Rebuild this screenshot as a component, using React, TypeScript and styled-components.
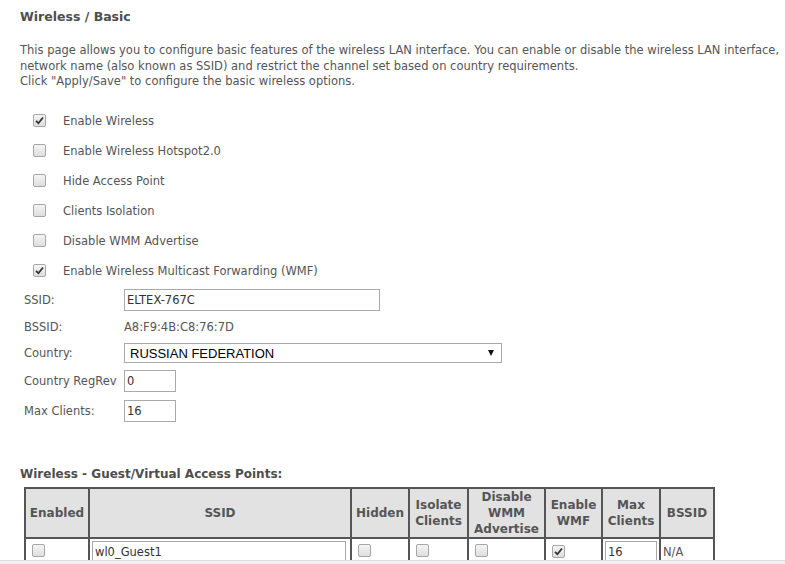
import styled, { createGlobalStyle } from 'styled-components';

const GlobalStyle = createGlobalStyle`
  html, body {
    margin: 0;
    padding: 0;
    background: #fff;
    overflow: hidden;
  }
  body {
    font-family: "DejaVu Sans", Verdana, sans-serif;
    font-size: 11.5px;
    color: #555;
  }
`;

const Page = styled.div`
  padding: 9px 20px 0 20px;
  width: 785px;
  box-sizing: border-box;
`;

const Title = styled.div`
  font-weight: bold;
  font-size: 12.5px;
  line-height: 16px;
  color: #4d4d4d;
`;

const Intro = styled.p`
  margin: 18px 0 0 0;
  line-height: 15.5px;
  white-space: nowrap;
`;

const Options = styled.div`
  margin-top: 16px;
  display: flex;
  flex-direction: column;
`;

const OptionRow = styled.label`
  display: flex;
  align-items: center;
  height: 30px;
  padding-left: 13px;
  gap: 17px;
`;

const Box = styled.span<{ $checked?: boolean }>`
  width: 11px;
  height: 11px;
  border: 1px solid #a6a6a6;
  border-radius: 2px;
  background: linear-gradient(#f4f4f4, #dedede);
  display: inline-flex;
  align-items: center;
  justify-content: center;
  flex: none;
  box-sizing: content-box;
`;

const Form = styled.div`
  margin-top: 1px;
  padding-left: 4px;
  display: grid;
  grid-template-columns: 100px auto;
  align-items: center;
`;

const Label = styled.div<{ $h: number }>`
  height: ${(p) => p.$h}px;
  display: flex;
  align-items: center;
`;

const Field = styled.div<{ $h: number }>`
  height: ${(p) => p.$h}px;
  display: flex;
  align-items: center;
`;

const TextInput = styled.input<{ $w: number }>`
  width: ${(p) => p.$w}px;
  height: 22px;
  box-sizing: border-box;
  border: 1px solid #a9a9a9;
  padding: 0 2px;
  font-family: inherit;
  font-size: 11.5px;
  color: #333;
  outline: none;
  background: #fff;
`;

const SelectWrap = styled.div`
  position: relative;
  width: 378px;
  height: 20px;
`;

const Select = styled.select`
  appearance: none;
  width: 100%;
  height: 100%;
  box-sizing: border-box;
  border: 1px solid #a9a9a9;
  border-radius: 0;
  background: #fff;
  padding: 0 0 0 5px;
  font-family: "Liberation Sans", Arial, sans-serif;
  font-size: 13px;
  color: #000;
  outline: none;
`;

const Arrow = styled.span`
  position: absolute;
  right: 8px;
  top: 7px;
  width: 0;
  height: 0;
  border-left: 3.5px solid transparent;
  border-right: 3.5px solid transparent;
  border-top: 6px solid #111;
  pointer-events: none;
`;

const SubTitle = styled.div`
  margin-top: 40px;
  font-weight: bold;
  font-size: 12px;
  line-height: 16px;
  color: #4d4d4d;
`;

const Table = styled.table`
  margin: 5px 0 0 4px;
  border-collapse: collapse;
  border: 2px solid #555;
`;

const Th = styled.th<{ $w: number }>`
  width: ${(p) => p.$w}px;
  height: 46px;
  box-sizing: border-box;
  border: 2px solid #555;
  background: #e2e2e2;
  color: #555;
  font-weight: bold;
  font-size: 12px;
  line-height: 16px;
  padding: 0 2px;
  text-align: center;
`;

const Td = styled.td`
  border: 2px solid #555;
  height: 26px;
  padding: 0 0 0 6px;
  vertical-align: middle;
`;

const TdText = styled(Td)`
  padding-left: 2px;
`;

const ScrollBar = styled.div`
  position: fixed;
  left: 0;
  right: 0;
  bottom: 0;
  height: 3px;
  background: #f1f1f1;
  border-top: 1px solid #dcdcdc;
`;

function Check({ checked }: { checked?: boolean }) {
  return (
    <Box $checked={checked}>
      {checked && (
        <svg width="9" height="9" viewBox="0 0 9 9">
          <path d="M1 4.8 L3.4 7.2 L8 1.5" fill="none" stroke="#333" strokeWidth="1.8" />
        </svg>
      )}
    </Box>
  );
}

const options = [
  { label: 'Enable Wireless', checked: true },
  { label: 'Enable Wireless Hotspot2.0', checked: false },
  { label: 'Hide Access Point', checked: false },
  { label: 'Clients Isolation', checked: false },
  { label: 'Disable WMM Advertise', checked: false },
  { label: 'Enable Wireless Multicast Forwarding (WMF)', checked: true },
];

export default function App() {
  return (
    <>
      <GlobalStyle />
      <Page>
        <Title>Wireless / Basic</Title>
        <Intro>
          This page allows you to configure basic features of the wireless LAN interface. You can enable or disable the wireless LAN interface,
          <br />
          network name (also known as SSID) and restrict the channel set based on country requirements.
          <br />
          Click "Apply/Save" to configure the basic wireless options.
        </Intro>
        <Options>
          {options.map((o) => (
            <OptionRow key={o.label}>
              <Check checked={o.checked} />
              <span>{o.label}</span>
            </OptionRow>
          ))}
        </Options>
        <Form>
          <Label $h={26}>SSID:</Label>
          <Field $h={26}>
            <TextInput $w={256} defaultValue="ELTEX-767C" />
          </Field>
          <Label $h={28}>BSSID:</Label>
          <Field $h={28}>A8:F9:4B:C8:76:7D</Field>
          <Label $h={25}>Country:</Label>
          <Field $h={25}>
            <SelectWrap>
              <Select defaultValue="RU">
                <option value="RU">RUSSIAN FEDERATION</option>
              </Select>
              <Arrow />
            </SelectWrap>
          </Field>
          <Label $h={31}>Country RegRev</Label>
          <Field $h={31}>
            <TextInput $w={52} defaultValue="0" />
          </Field>
          <Label $h={29}>Max Clients:</Label>
          <Field $h={29}>
            <TextInput $w={52} defaultValue="16" />
          </Field>
        </Form>
        <SubTitle>Wireless - Guest/Virtual Access Points:</SubTitle>
        <Table>
          <thead>
            <tr>
              <Th $w={64}>Enabled</Th>
              <Th $w={262}>SSID</Th>
              <Th $w={58}>Hidden</Th>
              <Th $w={59}>Isolate Clients</Th>
              <Th $w={77}>Disable WMM Advertise</Th>
              <Th $w={57}>Enable WMF</Th>
              <Th $w={58}>Max Clients</Th>
              <Th $w={54}>BSSID</Th>
            </tr>
          </thead>
          <tbody>
            <tr>
              <Td><Check /></Td>
              <TdText><TextInput $w={254} defaultValue="wl0_Guest1" /></TdText>
              <Td><Check /></Td>
              <Td><Check /></Td>
              <Td><Check /></Td>
              <Td><Check checked /></Td>
              <TdText><TextInput $w={52} defaultValue="16" /></TdText>
              <TdText>N/A</TdText>
            </tr>
          </tbody>
        </Table>
      </Page>
      <ScrollBar />
    </>
  );
}
